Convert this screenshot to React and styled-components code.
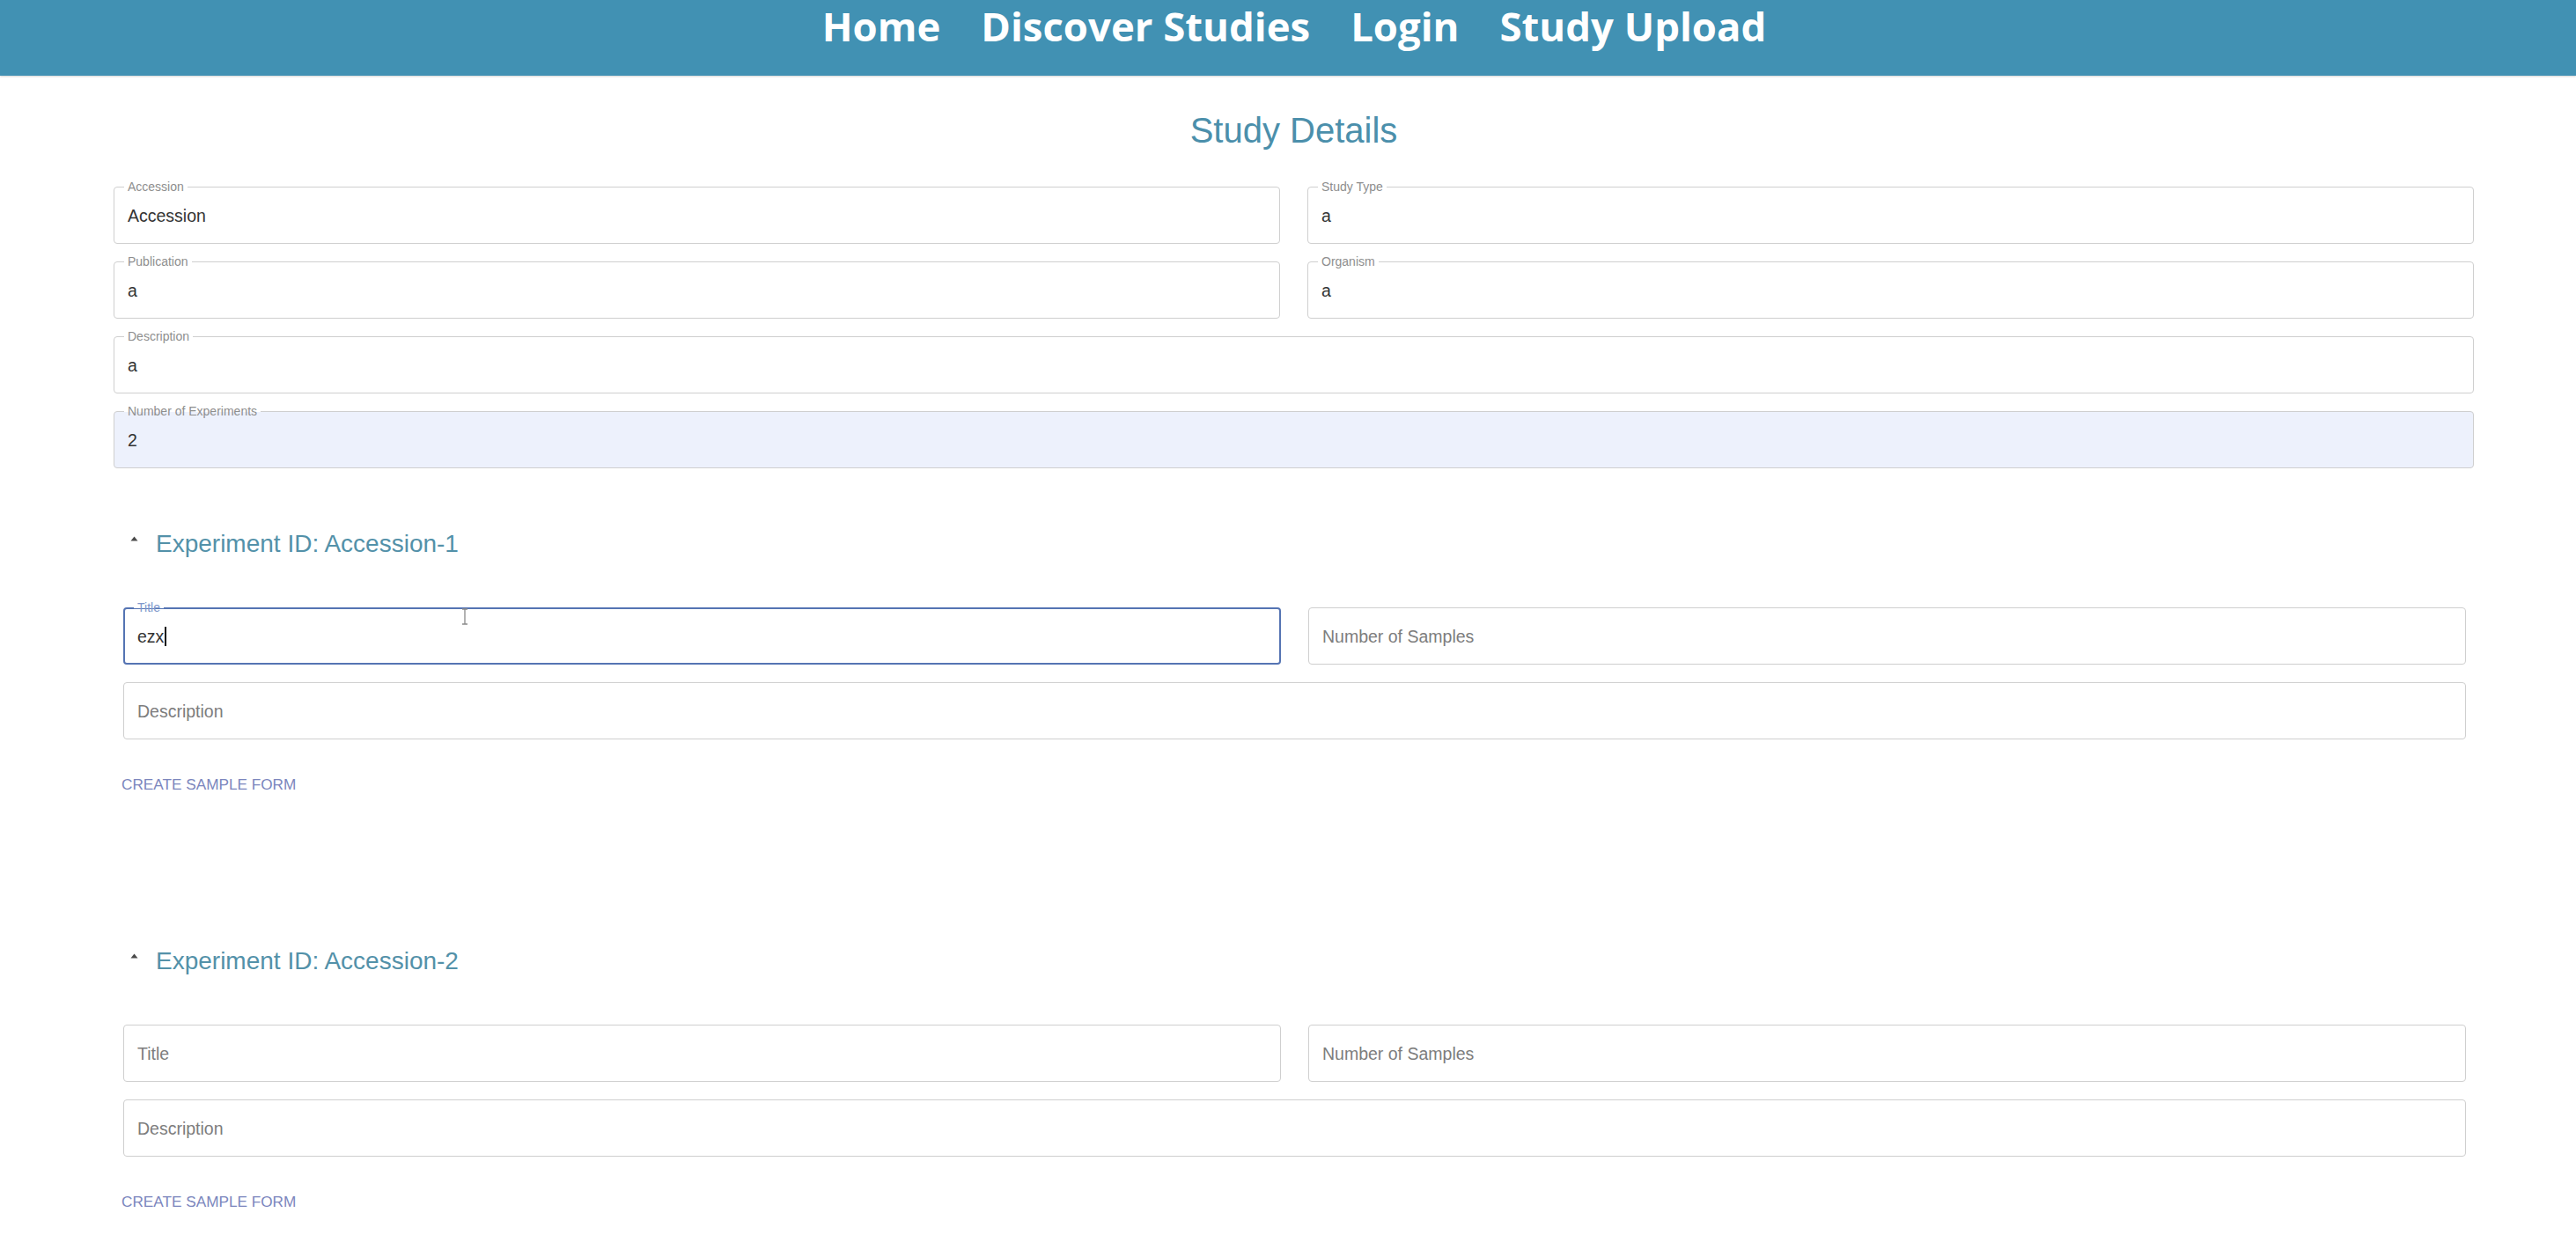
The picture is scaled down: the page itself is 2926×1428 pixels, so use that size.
import React from 'react'
import styled, { createGlobalStyle, css } from 'styled-components'

const colors = {
  header: '#4191b3',
  heading: '#4b8fab',
  subHeading: '#5391a9',
  border: '#cfcfcf',
  label: '#8e8e8e',
  value: '#333333',
  placeholder: '#7d7d7d',
  focus: '#5574b3',
  focusLabel: '#8099cc',
  autofill: '#edf1fc',
  action: '#7b86bd',
}

const GlobalStyle = createGlobalStyle`
  html, body {
    margin: 0;
    padding: 0;
    background: #ffffff;
  }
  body {
    font-family: "Liberation Sans", Arial, sans-serif;
    overflow: hidden;
  }
  * { box-sizing: border-box; }
`

const Header = styled.header`
  height: 86px;
  background: ${colors.header};
  box-shadow: 0 1px 2px rgba(0, 0, 0, 0.18);
  display: flex;
  justify-content: center;
  align-items: flex-start;
  gap: 46px;
  padding: 6px 0 0 14px;
`

const NavLink = styled.a`
  font-family: "Open Sans", "Noto Sans", sans-serif;
  font-weight: 700;
  font-size: 45.5px;
  line-height: 47px;
  color: #ffffff;
  text-decoration: none;
  white-space: nowrap;
`

const Main = styled.main`
  margin-left: 129px;
  width: 2681px;
`

const PageTitle = styled.h1`
  margin: 39px 0 0;
  font-weight: 400;
  font-size: 40px;
  line-height: 46px;
  color: ${colors.heading};
  text-align: center;
`

const FieldGrid = styled.div`
  display: grid;
  grid-template-columns: 1fr 1fr;
  column-gap: 31px;
  row-gap: 20px;
  margin-top: ${p => p.$top || 0}px;
  ${p => p.$inset && css`
    margin-left: 11px;
    margin-right: 9px;
  `}
`

const Field = styled.div`
  position: relative;
  height: 65px;
  border-radius: 4px;
  border: 1px solid ${colors.border};
  background: ${p => (p.$filled ? colors.autofill : '#ffffff')};
  display: flex;
  align-items: center;
  padding-left: 15px;
  grid-column: ${p => (p.$wide ? '1 / -1' : 'auto')};
  ${p => p.$focused && css`
    border: 2px solid ${colors.focus};
    padding-left: 14px;
  `}
`

const FloatLabel = styled.span`
  position: absolute;
  top: ${p => (p.$focused ? -10 : -9)}px;
  left: ${p => (p.$focused ? 10 : 11)}px;
  padding: 0 4px;
  font-size: 14px;
  line-height: 16px;
  color: ${p => (p.$focused ? colors.focusLabel : colors.label)};
  background: linear-gradient(to bottom, #ffffff 55%, transparent 55%);
`

const Value = styled.span`
  font-size: 19.5px;
  line-height: 24px;
  color: ${p => (p.$placeholder ? colors.placeholder : colors.value)};
  display: inline-flex;
  align-items: center;
`

const TextCaret = styled.span`
  display: inline-block;
  width: 2px;
  height: 22px;
  background: #111111;
  margin-left: 1px;
`

const MouseCursor = styled.svg`
  position: absolute;
  left: 381px;
  top: -1px;
  width: 10px;
  height: 19px;
`

const Section = styled.section`
  margin-top: ${p => p.$top}px;
`

const SectionHeader = styled.div`
  display: flex;
  align-items: flex-start;
  gap: 20px;
  height: 32px;
  padding-left: 19px;
`

const CaretIcon = styled.svg`
  width: 9px;
  height: 6px;
  margin-top: 7px;
  flex: none;
`

const SectionTitle = styled.h2`
  margin: 0;
  font-weight: 400;
  font-size: 28px;
  line-height: 32px;
  color: ${colors.subHeading};
`

const CreateButton = styled.button`
  display: block;
  margin: 41px 0 0 9px;
  padding: 0;
  border: none;
  background: none;
  font-family: "Liberation Sans", Arial, sans-serif;
  font-size: 17.2px;
  line-height: 20px;
  text-transform: uppercase;
  color: ${colors.action};
  cursor: pointer;
`

const OutlinedField = ({ label, value, placeholder, filled, wide, focused, children }) => (
  <Field $filled={filled} $wide={wide} $focused={focused}>
    {label && <FloatLabel $focused={focused}>{label}</FloatLabel>}
    {value !== undefined
      ? <Value>{value}{focused && <TextCaret />}</Value>
      : <Value $placeholder>{placeholder}</Value>}
    {children}
  </Field>
)

const Caret = () => (
  <CaretIcon viewBox="0 0 9 6">
    <path d="M4.5 0.5 L8.5 5.5 L0.5 5.5 Z" fill="#4a4a4a" />
  </CaretIcon>
)

const Experiment = ({ id, top, title }) => (
  <Section $top={top}>
    <SectionHeader>
      <Caret />
      <SectionTitle>Experiment ID: {id}</SectionTitle>
    </SectionHeader>
    <FieldGrid $top={56} $inset>
      {title
        ? (
          <OutlinedField label="Title" value={title} focused>
            <MouseCursor viewBox="0 0 10 19">
              <path d="M2 1 H8 M5 1 V18 M2 18 H8" stroke="#8a8a8a" strokeWidth="1.3" fill="none" />
            </MouseCursor>
          </OutlinedField>
        )
        : <OutlinedField placeholder="Title" />}
      <OutlinedField placeholder="Number of Samples" />
      <OutlinedField placeholder="Description" wide />
    </FieldGrid>
    <CreateButton>Create Sample Form</CreateButton>
  </Section>
)

const navItems = ['Home', 'Discover Studies', 'Login', 'Study Upload']

export default function App() {
  return (
    <>
      <GlobalStyle />
      <Header>
        {navItems.map(item => <NavLink key={item} href="#">{item}</NavLink>)}
      </Header>
      <Main>
        <PageTitle>Study Details</PageTitle>
        <FieldGrid $top={41}>
          <OutlinedField label="Accession" value="Accession" />
          <OutlinedField label="Study Type" value="a" />
          <OutlinedField label="Publication" value="a" />
          <OutlinedField label="Organism" value="a" />
          <OutlinedField label="Description" value="a" wide />
          <OutlinedField label="Number of Experiments" value="2" wide filled />
        </FieldGrid>
        <Experiment id="Accession-1" top={70} title="ezx" />
        <Experiment id="Accession-2" top={175} />
      </Main>
    </>
  )
}
